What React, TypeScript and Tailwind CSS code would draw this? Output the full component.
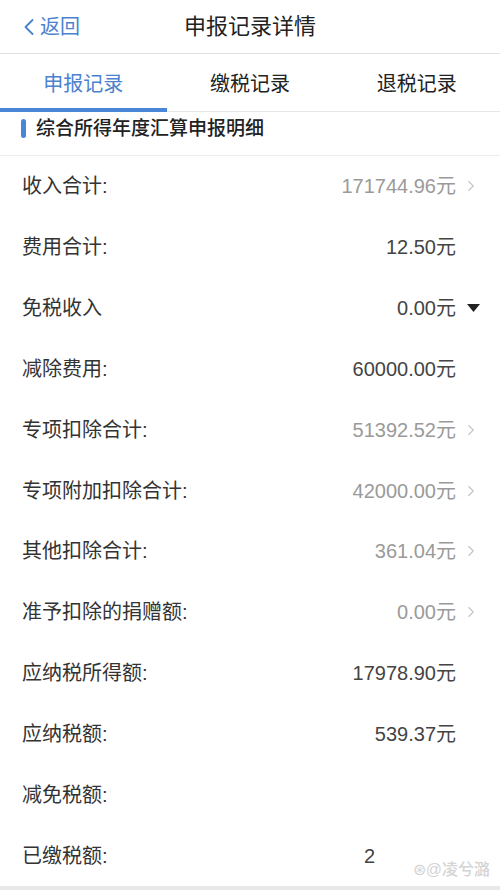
import { ChevronLeft, ChevronRight } from "lucide-react";

type Row = {
  label: string;
  value?: string;
  kind?: "link" | "plain" | "drop";
};

const rows: Row[] = [
  { label: "收入合计:", value: "171744.96元", kind: "link" },
  { label: "费用合计:", value: "12.50元" },
  { label: "免税收入", value: "0.00元", kind: "drop" },
  { label: "减除费用:", value: "60000.00元" },
  { label: "专项扣除合计:", value: "51392.52元", kind: "link" },
  { label: "专项附加扣除合计:", value: "42000.00元", kind: "link" },
  { label: "其他扣除合计:", value: "361.04元", kind: "link" },
  { label: "准予扣除的捐赠额:", value: "0.00元", kind: "link" },
  { label: "应纳税所得额:", value: "17978.90元" },
  { label: "应纳税额:", value: "539.37元" },
  { label: "减免税额:" },
];

function DetailRow({ label, value, kind = "plain" }: Row) {
  const gray = kind === "link";
  return (
    <div className="flex h-[61px] items-center pl-[22px] pr-[20px]">
      <div className="flex-1 text-[20px] text-[#333]">{label}</div>
      {value && (
        <div className={`text-[20px] ${gray ? "text-[#9a9a9a]" : "text-[#444]"}`}>{value}</div>
      )}
      <div className="flex w-[24px] items-center justify-end">
        {kind === "link" && <ChevronRight size={18} strokeWidth={1.5} className="text-[#c4c4c4]" />}
        {kind === "drop" && (
          <svg width="13" height="9" viewBox="0 0 13 9">
            <path d="M0 0 H13 L6.5 8 Z" fill="#222" />
          </svg>
        )}
      </div>
    </div>
  );
}

export default function App() {
  return (
    <div
      className="flex h-[890px] w-[500px] flex-col overflow-hidden bg-white"
      style={{ fontFamily: '"Liberation Sans", "Noto Sans CJK SC", sans-serif' }}
    >
      {/* Nav bar */}
      <div className="relative flex h-[54px] shrink-0 items-center justify-center border-b border-[#e2e2e2]">
        <div className="absolute left-[15px] flex items-center text-[20px] text-[#4a82cf]">
          <ChevronLeft size={28} strokeWidth={1.6} className="-mr-[3px]" />
          返回
        </div>
        <div className="text-[22px] text-[#222]">申报记录详情</div>
      </div>

      {/* Tabs */}
      <div className="flex h-[58px] shrink-0 border-b border-[#e6e6e6]">
        <div className="relative flex flex-1 items-center justify-center pt-[2px] text-[20px] text-[#4a82cf]">
          申报记录
          <div className="absolute bottom-[-1px] left-0 h-[4px] w-full bg-[#4a86d8]" />
        </div>
        <div className="flex flex-1 items-center justify-center pt-[2px] text-[20px] text-[#222]">缴税记录</div>
        <div className="flex flex-1 items-center justify-center pt-[2px] text-[20px] text-[#222]">退税记录</div>
      </div>

      {/* Section title */}
      <div className="flex h-[44px] shrink-0 items-start gap-[10px] border-b border-[#ececec] pl-[21px] pt-[4px]">
        <div className="mt-[3px] h-[19px] w-[5px] rounded-full bg-[#4a86d8]" />
        <div className="text-[19px] font-medium leading-[26px] text-[#222]">综合所得年度汇算申报明细</div>
      </div>

      {rows.map((r) => (
        <DetailRow key={r.label} {...r} />
      ))}

      <div className="relative flex h-[61px] items-center pl-[22px] pr-[20px]">
        <div className="flex-1 text-[20px] text-[#333]">已缴税额:</div>
        <div className="absolute left-[364px] text-[20px] text-[#444]">2</div>
        <div className="absolute bottom-[4px] right-[10px] text-[16px] font-medium text-[#d4d4d4]">⊛@凌兮潞</div>
      </div>

      <div className="mt-auto h-[4px] shrink-0 bg-[#e8e8e8]" />
    </div>
  );
}
